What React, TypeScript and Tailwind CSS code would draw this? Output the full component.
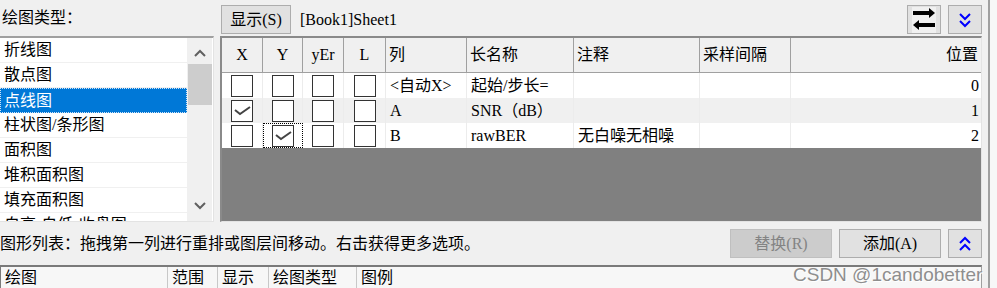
import React from 'react'

// ============================================================================
// Data
// ============================================================================

const PLOT_TYPES = ['折线图', '散点图', '点线图', '柱状图/条形图', '面积图', '堆积面积图', '填充面积图', '自高-自低-收盘图']

const COL_W = ['w-[41px]', 'w-[40px]', 'w-[41px]', 'w-[42px]', 'w-[81px]', 'w-[107px]', 'w-[126px]', 'w-[91px]']

const HEADERS = ['X', 'Y', 'yEr', 'L', '列', '长名称', '注释', '采样间隔']

const ROWS = [
  { checks: [false, false, false, false], col: '<自动X>', name: '起始/步长=', note: '', pos: '0' },
  { checks: [true, false, false, false], col: 'A', name: 'SNR（dB）', note: '', pos: '1' },
  { checks: [false, true, false, false], col: 'B', name: 'rawBER', note: '无白噪无相噪', pos: '2' },
]

// SimSun-ish: serif latin, CJK fallback
const FONT = "font-['Liberation_Serif','Noto_Sans_CJK_SC',serif]"

// ============================================================================
// Small pieces
// ============================================================================

function Chevron({ up }: { up?: boolean }) {
  return (
    <svg width="12" height="8" viewBox="0 0 12 8">
      <polyline
        points={up ? '1,7 6,2 11,7' : '1,1 6,6 11,1'}
        fill="none"
        stroke="#606060"
        strokeWidth="2"
      />
    </svg>
  )
}

function DoubleChevron({ up }: { up?: boolean }) {
  return (
    <svg width="12" height="16" viewBox="0 0 12 16">
      <g fill="none" stroke="#0000ff" strokeWidth="2">
        {up ? (
          <>
            <polyline points="1,7 6,2 11,7" />
            <polyline points="1,14 6,9 11,14" />
          </>
        ) : (
          <>
            <polyline points="1,2 6,7 11,2" />
            <polyline points="1,9 6,14 11,9" />
          </>
        )}
      </g>
    </svg>
  )
}

function SwapIcon() {
  return (
    <svg width="24" height="26" viewBox="0 0 24 26">
      <rect x="1" y="4" width="17" height="4" fill="#000" />
      <polygon points="17,1 23,6 17,11" fill="#000" />
      <rect x="6" y="16" width="17" height="4" fill="#000" />
      <polygon points="7,13 1,18 7,23" fill="#000" />
    </svg>
  )
}

function CheckBox({ checked }: { checked: boolean }) {
  return (
    <div className="w-[22px] h-[22px] border border-[#333] bg-white">
      {checked && (
        <svg width="20" height="20" viewBox="0 0 20 20">
          <polyline points="3,9 8,13 18,6" fill="none" stroke="#444" strokeWidth="2" />
        </svg>
      )}
    </div>
  )
}

// ============================================================================
// Component
// ============================================================================

export default function App() {
  return (
    <div className={`w-[997px] h-[288px] overflow-hidden bg-[#f0f0f0] flex text-[16px] leading-none text-black ${FONT}`}>
      <div className="w-[988px] flex flex-col relative">
        {/* top section */}
        <div className="h-[222px] flex">
          {/* plot types */}
          <div className="w-[214px] flex flex-col">
            <div className="h-[36px] pl-[2px] pt-[10px]">绘图类型：</div>
            <div className="flex-1 flex border-t-2 border-t-[#a0a0a0] border-r border-b border-r-[#e3e3e3] border-b-[#e3e3e3] bg-white overflow-hidden">
              <div className="w-[187px] flex flex-col">
                {PLOT_TYPES.map((t, i) =>
                  i === 2 ? (
                    <div
                      key={t}
                      className="h-[25px] shrink-0 bg-[#0078d7] text-white border border-dotted border-[#cfe3f7] pl-[3px] flex items-center"
                    >
                      {t}
                    </div>
                  ) : (
                    <div key={t} className="h-[25px] shrink-0 border-b border-[#f0f0f0] pl-[4px] flex items-center">
                      {t}
                    </div>
                  )
                )}
              </div>
              <div className="w-[25px] bg-[#f0f0f0] flex flex-col items-center">
                <div className="h-[26px] flex items-center justify-center pt-[4px]">
                  <Chevron up />
                </div>
                <div className="w-[24px] h-[41px] bg-[#cdcdcd]" />
                <div className="flex-1" />
                <div className="h-[26px] flex items-center justify-center pb-[4px]">
                  <Chevron />
                </div>
              </div>
            </div>
          </div>

          {/* worksheet columns */}
          <div className="ml-[6px] w-[762px] flex flex-col">
            <div className="h-[36px] flex items-start pt-[5px]">
              <div className="ml-[1px] w-[70px] h-[29px] bg-[#e1e1e1] border border-[#adadad] flex items-center justify-center">
                显示(S)
              </div>
              <div className="ml-[9px] h-[29px] flex items-center">[Book1]Sheet1</div>
              <div className="ml-auto w-[34px] h-[29px] bg-[#e1e1e1] border border-[#adadad] flex items-center justify-center">
                <div className="w-[24px] h-[26px] bg-[#f0f0f0] flex items-center justify-center">
                  <SwapIcon />
                </div>
              </div>
              <div className="ml-[7px] w-[34px] h-[29px] bg-[#e1e1e1] border border-[#adadad] flex items-center justify-center">
                <DoubleChevron />
              </div>
            </div>

            <div className="flex-1 flex flex-col border-t-2 border-l-2 border-t-[#8a8a8a] border-l-[#8a8a8a] border-r border-b border-r-[#e3e3e3] border-b-[#e3e3e3]">
              {/* header */}
              <div className="h-[35px] flex border-b border-[#a0a0a0] bg-[#f0f0f0] shrink-0">
                {HEADERS.map((h, i) => (
                  <div
                    key={h}
                    className={`${COL_W[i]} border-r border-[#a0a0a0] flex items-center ${i < 4 ? 'justify-center' : 'pl-[3px]'}`}
                  >
                    {h}
                  </div>
                ))}
                <div className="flex-1 flex items-center justify-end pr-[3px]">位置</div>
              </div>

              {/* rows */}
              {ROWS.map((r, ri) => (
                <div key={ri} className={`h-[25px] flex shrink-0 ${ri === 1 ? 'bg-[#f0f0f0]' : 'bg-white'}`}>
                  {r.checks.map((c, ci) => (
                    <div
                      key={ci}
                      className={`${COL_W[ci]} flex items-center justify-center ${
                        ri === 2 && ci === 1 ? 'border border-dotted border-black' : 'border-r border-[#ececec]'
                      }`}
                    >
                      <CheckBox checked={c} />
                    </div>
                  ))}
                  <div className={`${COL_W[4]} border-r border-[#ececec] flex items-center pl-[4px]`}>{r.col}</div>
                  <div className={`${COL_W[5]} border-r border-[#ececec] flex items-center pl-[4px]`}>{r.name}</div>
                  <div className={`${COL_W[6]} border-r border-[#ececec] flex items-center pl-[4px]`}>{r.note}</div>
                  <div className={`${COL_W[7]} border-r border-[#ececec]`} />
                  <div className="flex-1 flex items-center justify-end pr-[2px]">{r.pos}</div>
                </div>
              ))}
              <div className="flex-1 bg-[#808080]" />
            </div>
          </div>
        </div>

        {/* plot list bar */}
        <div className="h-[43px] flex items-center">
          <div className="pt-[1px]">图形列表：拖拽第一列进行重排或图层间移动。右击获得更多选项。</div>
          <div className="ml-auto w-[102px] h-[29px] bg-[#cccccc] border border-[#bfbfbf] text-[#838383] flex items-center justify-center">
            替换(R)
          </div>
          <div className="ml-[7px] w-[102px] h-[29px] bg-[#e1e1e1] border border-[#adadad] flex items-center justify-center">
            添加(A)
          </div>
          <div className="ml-[7px] mr-[6px] w-[34px] h-[29px] bg-[#e1e1e1] border border-[#adadad] flex items-center justify-center">
            <DoubleChevron up />
          </div>
        </div>

        {/* plot list */}
        <div className="flex-1 mr-[6px] border-t-2 border-l border-t-[#7a7a7a] border-l-[#7a7a7a] border-r border-r-[#a0a0a0] bg-[#f7f7f7] flex items-start">
          <div className="w-[167px] pl-[4px] pt-[3px] border-r border-[#c8c8c8] h-full">绘图</div>
          <div className="w-[50px] pl-[4px] pt-[3px] border-r border-[#c8c8c8] h-full">范围</div>
          <div className="w-[51px] pl-[4px] pt-[3px] border-r border-[#c8c8c8] h-full">显示</div>
          <div className="w-[88px] pl-[4px] pt-[3px] border-r border-[#c8c8c8] h-full">绘图类型</div>
          <div className="pl-[4px] pt-[3px]">图例</div>
        </div>

        {/* watermark */}
        <div className="absolute left-[793px] top-[265px] font-['Liberation_Sans',sans-serif] text-[19px] leading-none text-[#8e8e8e] [text-shadow:0_0_1px_#fff,1px_1px_0_#fff]">
          CSDN @1candobetter
        </div>
      </div>
      <div className="w-[2px] bg-[#a0a0a0]" />
      <div className="flex-1 bg-[#f7f7f7]" />
    </div>
  )
}
